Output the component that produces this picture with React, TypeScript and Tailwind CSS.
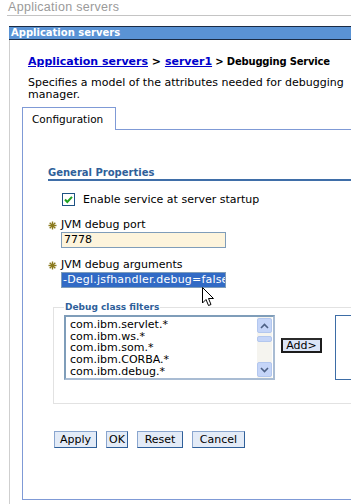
const items = ['com.ibm.servlet.*', 'com.ibm.ws.*', 'com.ibm.som.*', 'com.ibm.CORBA.*', 'com.ibm.debug.*']

function Star() {
    return (
        <svg width="9" height="9" viewBox="0 0 9 9" className="shrink-0">
            <g stroke="#8a7a1e" strokeWidth="1.4">
                <line x1="4.5" y1="0.5" x2="4.5" y2="8.5" />
                <line x1="0.5" y1="4.5" x2="8.5" y2="4.5" />
                <line x1="1.7" y1="1.7" x2="7.3" y2="7.3" />
                <line x1="7.3" y1="1.7" x2="1.7" y2="7.3" />
            </g>
        </svg>
    )
}

function Btn({ label, w }: { label: string; w: string }) {
    return (
        <button className={`${w} h-[17px] border border-[#8aa6cf] border-r-[#2f5f99] border-b-[#2f5f99] bg-[#e3ebf7] text-[11px] leading-[14px] text-black text-center`}>
            {label}
        </button>
    )
}

export default function App() {
    return (
        <div className="w-[351px] h-[504px] overflow-hidden bg-white relative text-black" style={{ fontFamily: '"DejaVu Sans", Verdana, sans-serif' }}>
            <div className="ml-[7px] h-[16px] border-b border-[#c4c4c4] pl-[1px] text-[12.5px] leading-[15px] text-[#9a9a9a] tracking-[0.3px]" style={{ fontFamily: '"Liberation Sans", Arial, sans-serif' }}>
                Application servers
            </div>
            <div className="ml-[9px] mt-[10px] w-[360px] h-[14px] bg-[#5a93d5] border-t border-b border-[#1a2b44] pl-[2px] text-white font-bold text-[10px] leading-[12px]">
                Application servers
            </div>
            <div className="ml-[9px] h-[470px] border-l border-[#cfcfcf] pl-[12px] w-[400px]">
                <div className="pl-[6px] pt-[16px] text-[11px] leading-[12px] font-bold whitespace-nowrap">
                    <span className="text-[#0000cc] underline">Application servers</span> &gt;{' '}
                    <span className="text-[#0000cc] underline">server1</span>
                    <span className="text-[10px] tracking-[-0.2px]"> &gt; Debugging Service</span>
                </div>
                <div className="pl-[6px] mt-[9px] text-[11px] leading-[12px] w-[360px]">
                    Specifies a model of the attributes needed for debugging<br />manager.
                </div>
                <div className="mt-[6px] flex w-[340px]">
                    <div className="w-[94px] h-[23px] border border-b-0 border-[#7f9ad6] pl-[9px] text-[10.5px] leading-[22px]">
                        Configuration
                    </div>
                    <div className="flex-1 border-b border-[#7f9ad6]" />
                </div>
                <div className="h-[370px] w-[340px] border-l border-b border-[#7f9ad6] pl-[25px] pt-[36px]">
                    <div className="border-b-2 border-[#3f6ea8] text-[#2f5f9a] font-bold text-[10px] leading-[13px]">
                        General Properties
                    </div>
                    <label className="mt-[12px] ml-[14px] flex items-center gap-[8px] text-[11px] leading-[13px]">
                        <svg width="13" height="13" viewBox="0 0 13 13">
                            <rect x="0.5" y="0.5" width="12" height="12" fill="#fff" stroke="#1d5283" />
                            <path d="M3 6.5 L5.3 9 L10 3.8" fill="none" stroke="#21a121" strokeWidth="2" />
                        </svg>
                        Enable service at server startup
                    </label>
                    <div className="mt-[13px] flex items-center gap-[4px] text-[11px] leading-[12px]">
                        <Star />
                        JVM debug port
                    </div>
                    <div className="ml-[13px] mt-[1px] w-[165px] h-[16px] border border-[#7f9db9] bg-[#fdf4dc] pl-[2px] text-[11px] leading-[14px]">
                        7778
                    </div>
                    <div className="mt-[11px] flex items-center gap-[4px] text-[11px] leading-[12px]">
                        <Star />
                        JVM debug arguments
                    </div>
                    <div className="ml-[13px] mt-[1px] w-[165px] h-[16px] border border-[#7f9db9] bg-white overflow-hidden whitespace-nowrap text-[11px] leading-[14px] tracking-[0.2px]">
                        <span className="bg-[#316ac5] text-white pl-[1px] inline-block w-[180px]">-Degl.jsfhandler.debug=false</span>
                    </div>
                    <fieldset className="mt-[13px] ml-[5px] border border-[#e2e2e2] pl-[10px] pb-[23px]">
                        <legend className="px-[1px] text-[#2f5f9a] font-bold text-[9px] leading-[12px]">Debug class filters</legend>
                        <div className="flex items-start">
                            <div className="mt-[2px] w-[211px] h-[65px] border-2 border-[#7f9db9] border-r-[#a9bcd3] border-b-[#a9bcd3] flex">
                                <div className="flex-1 pl-[4px] pt-[2px] text-[11px] leading-[11.7px] overflow-hidden whitespace-nowrap">
                                    {items.map(t => <div key={t}>{t}</div>)}
                                </div>
                                <div className="w-[15px] flex flex-col bg-[#f5f4ef] py-[1px] mr-[1px]">
                                    <div className="h-[15px] bg-[#c5d5f8] border border-[#b3c7ee] rounded-[2px] flex items-center justify-center">
                                        <svg width="9" height="6" viewBox="0 0 9 6"><path d="M1 5 L4.5 1.5 L8 5" fill="none" stroke="#4d6185" strokeWidth="1.6" /></svg>
                                    </div>
                                    <div className="mt-[3px] h-[6px] bg-[#c5d5f8] border border-[#b3c7ee] rounded-[2px]" />
                                    <div className="flex-1" />
                                    <div className="h-[15px] bg-[#c5d5f8] border border-[#b3c7ee] rounded-[2px] flex items-center justify-center">
                                        <svg width="9" height="6" viewBox="0 0 9 6"><path d="M1 1 L4.5 4.5 L8 1" fill="none" stroke="#4d6185" strokeWidth="1.6" /></svg>
                                    </div>
                                </div>
                            </div>
                            <button className="ml-[6px] mt-[25px] w-[41px] h-[15px] border-2 border-[#1c1c1c] border-t-[#2b2b2b] bg-[#dbe5f7] text-[11px] leading-[11px]">
                                Add&gt;
                            </button>
                            <div className="ml-[13px] mt-[2px] w-[60px] h-[65px] border border-[#3d6da6]" />
                        </div>
                    </fieldset>
                    <div className="mt-[27px] ml-[6px] flex gap-[9px]">
                        <Btn label="Apply" w="w-[43px]" />
                        <Btn label="OK" w="w-[22px]" />
                        <Btn label="Reset" w="w-[46px]" />
                        <Btn label="Cancel" w="w-[53px]" />
                    </div>
                </div>
            </div>
            <svg className="absolute left-[202px] top-[287px]" width="13" height="21" viewBox="0 0 13 21">
                <path d="M0.5 0.5 L0.5 16 L4 12.5 L6.5 18.5 L9 17.5 L6.5 11.5 L11.5 11.5 Z" fill="#fff" stroke="#000" strokeWidth="1" strokeLinejoin="miter" />
            </svg>
        </div>
    )
}
